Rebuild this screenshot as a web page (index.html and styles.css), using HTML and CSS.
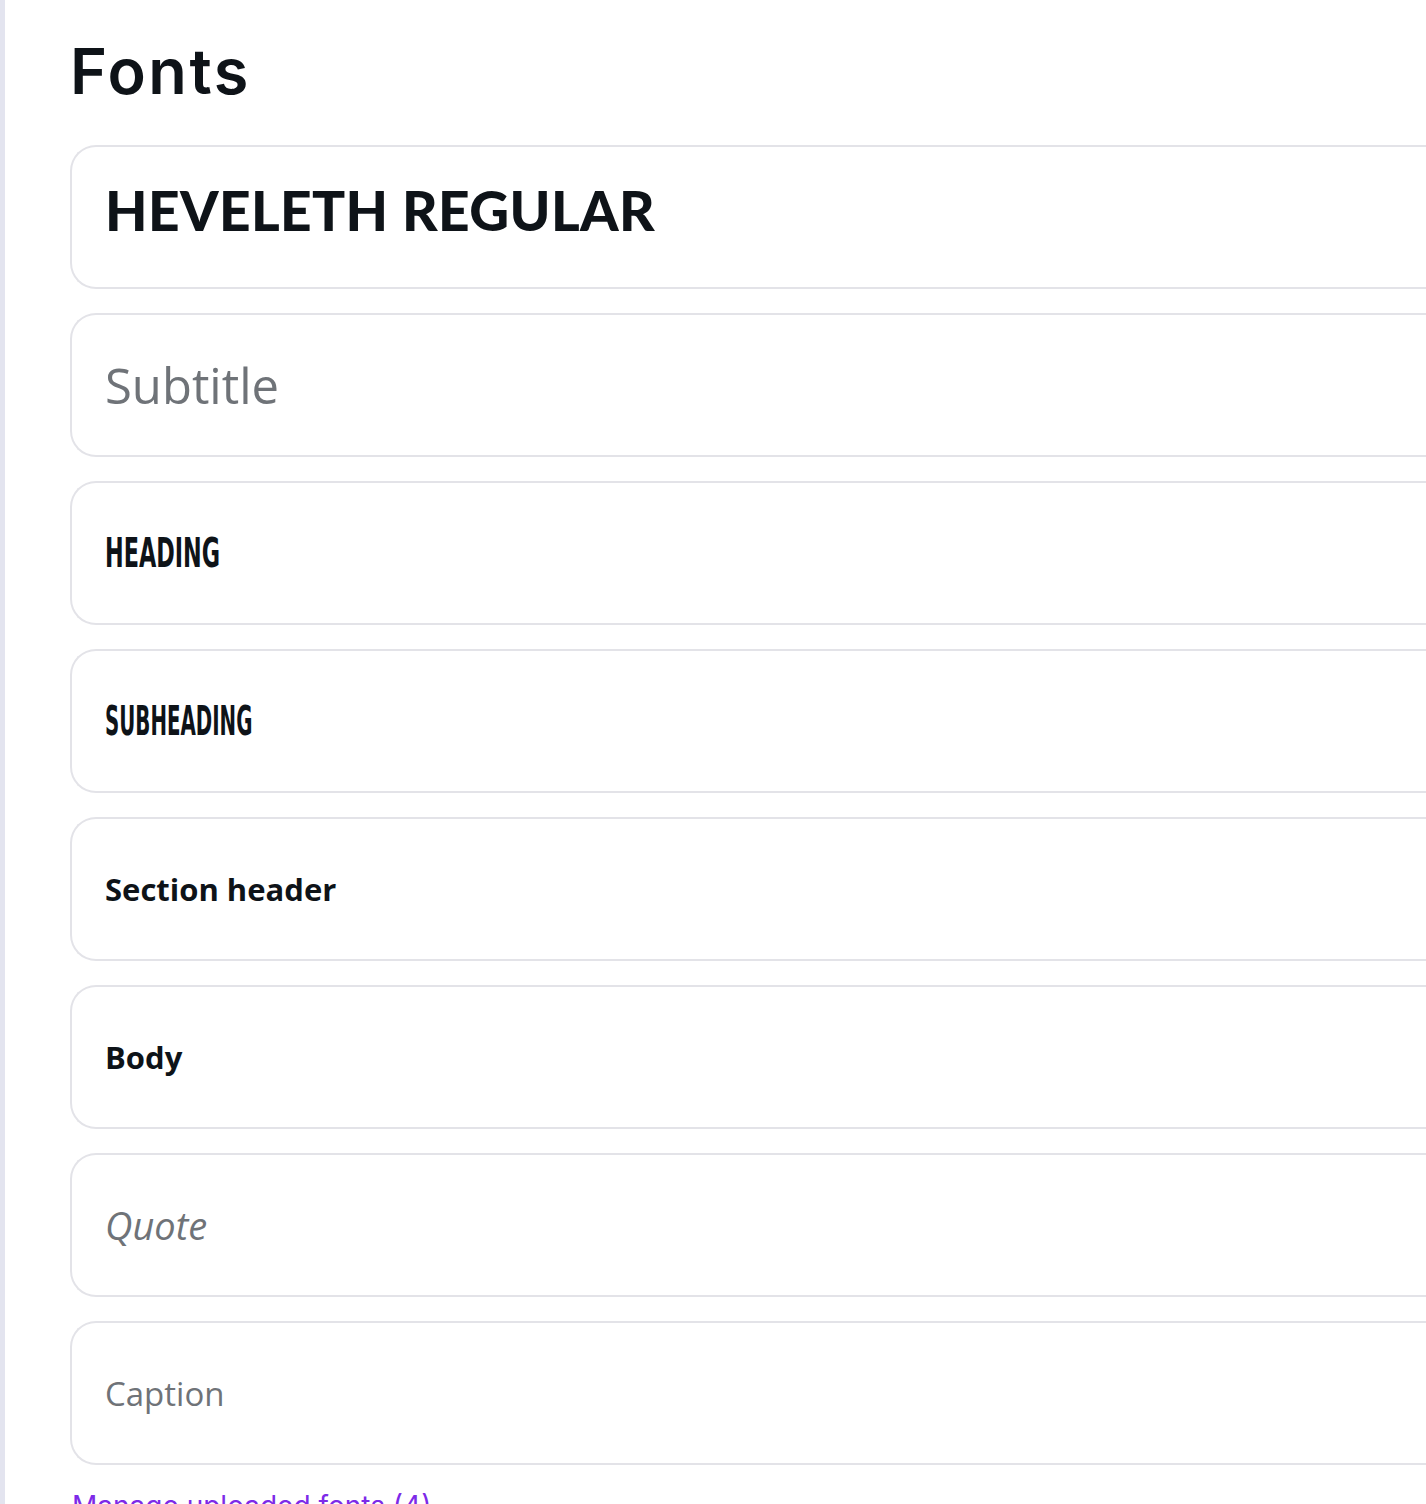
FILE: index.html
```html
<!DOCTYPE html>
<html>
<head>
<meta charset="utf-8">
<link rel="stylesheet" href="styles.css">
</head>
<body>
<div class="page">
  <div class="rail"></div>
  <main class="main">
    <h1 class="title">Fonts</h1>
    <div class="list">
      <div class="card"><span class="t-heveleth">HEVELETH REGULAR</span></div>
      <div class="card"><span class="t-subtitle">Subtitle</span></div>
      <div class="card"><span class="t-cond t-heading">HEADING</span></div>
      <div class="card"><span class="t-cond t-subheading">SUBHEADING</span></div>
      <div class="card"><span class="t-section">Section header</span></div>
      <div class="card"><span class="t-section">Body</span></div>
      <div class="card"><span class="t-quote">Quote</span></div>
      <div class="card"><span class="t-caption">Caption</span></div>
    </div>
    <a class="manage" href="#">Manage uploaded fonts (4)</a>
  </main>
</div>
</body>
</html>
```
FILE: styles.css
```css
html, body {
  margin: 0;
  padding: 0;
  background: #ffffff;
  overflow: hidden;
}
body {
  font-family: Inter, "Noto Sans", sans-serif;
  color: #0e1318;
}
.page {
  display: flex;
  width: 100%;
  height: 1504px;
  overflow: hidden;
}
.rail {
  width: 5px;
  flex: none;
  background: #e3e4ef;
}
.main {
  flex: 1;
  min-width: 0;
  padding-left: 65px;
}
.title {
  margin: 0;
  padding-top: 36px;
  height: 145px;
  box-sizing: border-box;
  font-family: Inter, sans-serif;
  font-weight: 600;
  font-size: 63px;
  line-height: 70px;
  letter-spacing: 2.5px;
  color: #0e1318;
}
.list {
  display: flex;
  flex-direction: column;
  gap: 24px;
}
.card {
  height: 144px;
  box-sizing: border-box;
  border: 2px solid #e3e3e8;
  border-right: none;
  border-radius: 26px 0 0 26px;
  display: flex;
  align-items: center;
  padding-left: 33px;
}
.t-heveleth {
  font-family: Lato, sans-serif;
  font-weight: 900;
  font-size: 55px;
  letter-spacing: 0.4px;
  margin-top: -14px;
  color: #0e1318;
}
.t-subtitle {
  font-family: "Open Sans", sans-serif;
  font-weight: 400;
  font-size: 49px;
  color: #6f7378;
}
.t-cond {
  font-family: "DejaVu Sans Condensed", "DejaVu Sans", sans-serif;
  font-weight: 700;
  font-size: 40px;
  display: inline-block;
  transform-origin: left center;
  color: #0e1318;
}
.t-heading {
  transform: scaleX(0.62);
}
.t-subheading {
  transform: scaleX(0.55);
}
.t-section {
  font-family: "Open Sans", sans-serif;
  font-weight: 700;
  font-size: 31px;
  color: #0e1318;
}
.t-quote {
  font-family: "Open Sans", sans-serif;
  font-style: italic;
  font-size: 38px;
  color: #6f7378;
}
.t-caption {
  font-family: "Open Sans", sans-serif;
  font-size: 33px;
  color: #6f7378;
}
.manage {
  display: block;
  margin-top: 24px;
  font-family: Inter, sans-serif;
  font-size: 28px;
  color: #7d2ae8;
  text-decoration: none;
  padding-left: 2px;
}
```
